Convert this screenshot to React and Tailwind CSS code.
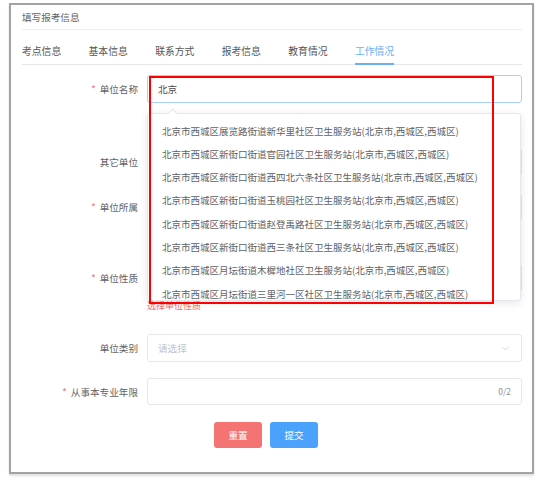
import React from 'react';
import { ChevronDown } from 'lucide-react';

const tabs = ['考点信息', '基本信息', '联系方式', '报考信息', '教育情况', '工作情况'];

const options = [
  '北京市西城区展览路街道新华里社区卫生服务站(北京市,西城区,西城区)',
  '北京市西城区新街口街道官园社区卫生服务站(北京市,西城区,西城区)',
  '北京市西城区新街口街道西四北六条社区卫生服务站(北京市,西城区,西城区)',
  '北京市西城区新街口街道玉桃园社区卫生服务站(北京市,西城区,西城区)',
  '北京市西城区新街口街道赵登禹路社区卫生服务站(北京市,西城区,西城区)',
  '北京市西城区新街口街道西三条社区卫生服务站(北京市,西城区,西城区)',
  '北京市西城区月坛街道木樨地社区卫生服务站(北京市,西城区,西城区)',
  '北京市西城区月坛街道三里河一区社区卫生服务站(北京市,西城区,西城区)',
];

const Label = ({ required, children }) => (
  <div className="flex h-[28px] w-[116px] shrink-0 items-center justify-end text-[9.6px] text-[#606266]">
    {required && <span className="mr-[4px] text-[#f56c6c]">*</span>}
    {children}
  </div>
);

const Row = ({ label, required, className, children }) => (
  <div className={`flex items-start gap-[9px] ${className}`}>
    <Label required={required}>{label}</Label>
    <div className="flex-1">{children}</div>
  </div>
);

const Input = ({ focused, children, height = 'h-[28px]' }) => (
  <div
    className={`flex ${height} items-center rounded-[3px] border px-[10px] text-[9.6px] ${
      focused ? 'border-[#a9d0fb]' : 'border-[#e4e7ed]'
    }`}
  >
    {children}
  </div>
);

const App = () => {
  return (
    <div
      className="relative h-[481px] w-[551px] overflow-hidden bg-white"
      style={{ fontFamily: '"Noto Sans CJK SC", "Noto Sans", sans-serif' }}
    >
      <div className="ml-[9px] mt-[3px] h-[471px] w-[525px] border-2 border-[#a3a3a3] pl-[11px] pr-[10px] shadow-[0_2px_2px_rgba(0,0,0,0.12)]">
        <div className="flex h-[25px] items-center border-b border-[#ebeef5] text-[9.6px] text-[#606266]">
          填写报考信息
        </div>

        <div className="mt-[10px] flex gap-[27.4px] border-b border-[#e4e7ed]">
          {tabs.map((t, i) => (
            <div
              key={t}
              className={`-mb-px flex h-[25px] items-center border-b-2 text-[9.8px] ${
                i === 5 ? 'border-[#6aaef7] text-[#6aaef7]' : 'border-transparent text-[#555]'
              }`}
            >
              {t}
            </div>
          ))}
        </div>

        <Row label="单位名称" required className="mt-[10px]">
          <Input focused>
            <span className="text-[#4a4a4a]">北京</span>
          </Input>
        </Row>

        <Row label="其它单位" className="mt-[45px]">
          <Input />
        </Row>

        <Row label="单位所属" required className="mt-[17px]">
          <Input />
        </Row>

        <Row label="单位性质" required className="mt-[43px]">
          <Input />
          <div className="mt-[8px] text-[9px] leading-[12px] text-[#f56c6c]">选择单位性质</div>
        </Row>

        <Row label="单位类别" className="mt-[22px]">
          <Input>
            <span className="flex-1 text-[#c0c4cc]">请选择</span>
            <ChevronDown size={11} strokeWidth={1.5} className="text-[#c0c4cc]" />
          </Input>
        </Row>

        <Row label="从事本专业年限" required className="mt-[16px]">
          <Input height="h-[27px]">
            <span className="flex-1" />
            <span className="text-[8.5px] text-[#909399]">0/2</span>
          </Input>
        </Row>

        <div className="mt-[16px] flex gap-[8px] pl-[192px]">
          <button
            type="button"
            className="flex h-[26px] w-[48px] items-center justify-center rounded-[3px] bg-[#f47474] text-[9.6px] text-white"
          >
            重置
          </button>
          <button
            type="button"
            className="flex h-[26px] w-[48px] items-center justify-center rounded-[3px] bg-[#4aa2fc] text-[9.6px] text-white"
          >
            提交
          </button>
        </div>
      </div>

      {/* autocomplete dropdown */}
      <div className="absolute left-[147px] top-[113px] h-[188px] w-[374px] rounded-[3px] border border-[#e4e7ed] bg-white shadow-[0_2px_8px_rgba(0,0,0,0.1)]">
        <div className="absolute -top-[4px] left-[21px] h-[7px] w-[7px] rotate-45 border-l border-t border-[#e4e7ed] bg-white" />
        <div className="h-full overflow-hidden pt-[5px]">
          {options.map(o => (
            <div key={o} className="flex h-[23.3px] items-center whitespace-nowrap px-[14px] text-[9.5px] text-[#606266]">
              {o}
            </div>
          ))}
        </div>
      </div>

      {/* annotation */}
      <div className="pointer-events-none absolute left-[149px] top-[76px] h-[228px] w-[345px] border-2 border-[#f00]" />
    </div>
  );
};

export default App;
